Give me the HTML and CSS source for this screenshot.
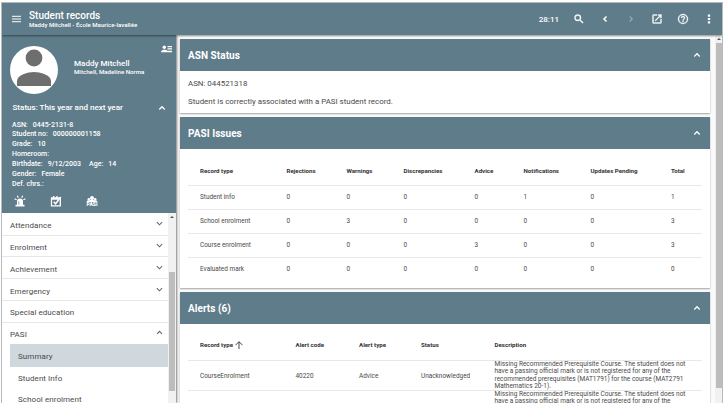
FILE: index.html
```html
<!DOCTYPE html>
<html lang="en">
<head>
<meta charset="utf-8">
<title>Student records</title>
<link rel="stylesheet" href="styles.css">
</head>
<body>
<svg class="defs" width="0" height="0">
  <symbol id="up" viewBox="0 0 24 24"><path d="M5.500 15.500l6.500-6.500 6.500 6.500" fill="none" stroke="currentColor" stroke-width="3"/></symbol>
  <symbol id="down" viewBox="0 0 24 24"><path d="M5 8.500l7 7 7-7" fill="none" stroke="currentColor" stroke-width="2.800"/></symbol>
</svg>
<div class="app">
  <header class="topbar">
    <svg class="menu" viewBox="0 0 10 8"><path d="M0 1h10M0 4h10M0 7h10" stroke="currentColor" stroke-width="1.1"/></svg>
    <div class="titles">
      <h1>Student records</h1>
      <p>Maddy Mitchell - École Maurice-lavallée</p>
    </div>
    <div class="actions">
      <span class="timer">28:11</span>
      <svg viewBox="0 0 24 24"><path fill="currentColor" stroke="currentColor" stroke-width=".8" d="M15.500 14h-.79l-.28-.27A6.470 6.470 0 0 0 16 9.500 6.500 6.500 0 1 0 9.500 16c1.610 0 3.090-.59 4.230-1.570l.27.28v.79l5 4.990L20.490 19l-4.990-5zm-6 0C7.010 14 5 11.990 5 9.500S7.010 5 9.500 5 14 7.010 14 9.500 11.990 14 9.500 14z"/></svg>
      <svg viewBox="0 0 24 24"><path fill="none" stroke="currentColor" stroke-width="3" d="M15 7l-5 5 5 5"/></svg>
      <svg class="dim" viewBox="0 0 24 24"><path fill="none" stroke="currentColor" stroke-width="2.400" d="M9.500 7l5 5-5 5"/></svg>
      <svg viewBox="0 0 24 24"><path fill="currentColor" stroke="currentColor" stroke-width=".6" d="M19 19H5V5h7V3H5a2 2 0 0 0-2 2v14a2 2 0 0 0 2 2h14a2 2 0 0 0 2-2v-7h-2v7zM14 3v2h3.590l-9.830 9.830 1.410 1.410L19 6.410V10h2V3h-7z"/></svg>
      <svg viewBox="0 0 24 24"><path fill="currentColor" stroke="currentColor" stroke-width=".5" d="M11 18h2v-2h-2v2zm1-16a10 10 0 1 0 0 20 10 10 0 0 0 0-20zm0 18a8 8 0 1 1 0-16 8 8 0 0 1 0 16zm0-14a4 4 0 0 0-4 4h2a2 2 0 1 1 4 0c0 2-3 1.750-3 5h2c0-2.250 3-2.500 3-5a4 4 0 0 0-4-4z"/></svg>
      <svg viewBox="0 0 24 24"><path fill="currentColor" d="M9.700 3h4.600v4.400H9.700zM9.700 9.800h4.600v4.400H9.700zM9.700 16.600h4.600V21H9.700z"/></svg>
    </div>
  </header>
  <div class="body">
    <aside class="side">
      <section class="profile">
        <div class="identity">
          <svg class="avatar" viewBox="0 0 48 48"><circle cx="24" cy="24" r="24" fill="#fff"/><circle cx="24" cy="12" r="8.400" fill="#6e6e6e"/><path d="M7 40v-5c0-6 11-9 17-9s17 3 17 9v5z" fill="#6e6e6e"/></svg>
          <div class="names"><strong>Maddy Mitchell</strong><span>Mitchell, Madeline Norma</span></div>
          <svg class="card-icon" viewBox="0 0 12 8"><g fill="currentColor"><circle cx="3.300" cy="2.300" r="1.700"/><path d="M0 7.200C0 5.300 2 4.700 3.300 4.700S6 5 6.300 5.700H11v1.500zM6.500 1H11v1.300H6.500zM6.500 3.300H11v1.300H6.500z"/></g></svg>
        </div>
        <div class="status"><span>Status: This year and next year</span><svg viewBox="0 0 24 24"><use href="#up"/></svg></div>
        <dl class="facts">
          <div><dt>ASN:</dt><dd>0445-2131-8</dd></div>
          <div><dt>Student no:</dt><dd>000000001158</dd></div>
          <div><dt>Grade:</dt><dd>10</dd></div>
          <div><dt>Homeroom:</dt></div>
          <div><dt>Birthdate:</dt><dd>9/12/2003</dd><dt class="second">Age:</dt><dd>14</dd></div>
          <div><dt>Gender:</dt><dd>Female</dd></div>
          <div><dt>Def. chrs.:</dt></div>
        </dl>
        <div class="badges">
          <svg viewBox="0 0 12 12"><g fill="currentColor"><path d="M3 10V6.500a3 3 0 0 1 6 0V10zM1.500 9.800h9v1.700h-9z"/><path d="M3.300.8l1 1.800M8.700.8l-1 1.800M.6 3.800l2 1M11.400 3.800l-2 1" stroke="currentColor" stroke-width="1.200"/></g><path d="M4.800 6.300V9.500" stroke="#5f7c8a" stroke-width=".7"/></svg>
          <svg viewBox="0 0 12 12"><path d="M1.500 3h8.800v7.800H1.500z" fill="none" stroke="currentColor" stroke-width="1.300"/><path d="M1.500 3h7v1.800h-7zM3 1h1.300v2H3zM6.300 1h1.300v2H6.300z" fill="currentColor"/><path d="M3.700 6.800l1.900 2L10.800 2" fill="none" stroke="currentColor" stroke-width="1.400"/></svg>
          <svg viewBox="0 0 12 12"><g fill="currentColor"><circle cx="6" cy="2.900" r="2"/><circle cx="2.800" cy="4.400" r="1.300"/><circle cx="9.200" cy="4.400" r="1.300"/><path d="M.6 6.900c0-1.500 1.800-1.700 2.700-1.300 1-1 4.400-1 5.400 0 .9-.4 2.700-.2 2.700 1.300z"/></g><text x="6" y="10.700" text-anchor="middle">PASI</text></svg>
        </div>
      </section>
      <div class="navwrap">
        <nav class="nav">
          <a>Attendance<svg viewBox="0 0 24 24"><use href="#down"/></svg></a>
          <a>Enrolment<svg viewBox="0 0 24 24"><use href="#down"/></svg></a>
          <a>Achievement<svg viewBox="0 0 24 24"><use href="#down"/></svg></a>
          <a>Emergency<svg viewBox="0 0 24 24"><use href="#down"/></svg></a>
          <a>Special education</a>
          <a class="open">PASI<svg viewBox="0 0 24 24"><use href="#up"/></svg></a>
          <a class="sub current">Summary</a>
          <a class="sub">Student Info</a>
          <a class="sub">School enrolment</a>
        </nav>
        <div class="bar"><i class="arrow"></i><i class="thumb"></i></div>
      </div>
    </aside>
    <main class="main">
      <section class="card asn">
        <h2>ASN Status<svg viewBox="0 0 24 24"><use href="#up"/></svg></h2>
        <div class="text"><p>ASN: 044521318</p><p>Student is correctly associated with a PASI student record.</p></div>
      </section>
      <section class="card issues">
        <h2>PASI Issues<svg viewBox="0 0 24 24"><use href="#up"/></svg></h2>
        <div class="table">
          <div class="row head"><b>Record type</b><b>Rejections</b><b>Warnings</b><b>Discrepancies</b><b>Advice</b><b>Notifications</b><b>Updates Pending</b><b>Total</b></div>
          <div class="row"><span>Student info</span><span>0</span><span>0</span><span>0</span><span>0</span><span>1</span><span>0</span><span>1</span></div>
          <div class="row"><span>School enrolment</span><span>0</span><span>3</span><span>0</span><span>0</span><span>0</span><span>0</span><span>3</span></div>
          <div class="row"><span>Course enrolment</span><span>0</span><span>0</span><span>0</span><span>3</span><span>0</span><span>0</span><span>3</span></div>
          <div class="row"><span>Evaluated mark</span><span>0</span><span>0</span><span>0</span><span>0</span><span>0</span><span>0</span><span>0</span></div>
        </div>
      </section>
      <section class="card alerts">
        <h2>Alerts (6)<svg viewBox="0 0 24 24"><use href="#up"/></svg></h2>
        <div class="table">
          <div class="row head"><b>Record type<svg class="sort" viewBox="0 0 8 8"><path d="M4 8V.8M.5 4.200L4 .7l3.500 3.500" fill="none" stroke="currentColor" stroke-width=".9"/></svg></b><b>Alert code</b><b>Alert type</b><b>Status</b><b>Description</b></div>
          <div class="row"><span>CourseEnrolment</span><span>40220</span><span>Advice</span><span>Unacknowledged</span><span class="desc">Missing Recommended Prerequisite Course. The student does not<br>have a passing official mark or is not registered for any of the<br>recommended prerequisites (MAT1791) for the course (MAT2791<br>Mathematics 20-1).</span></div>
          <div class="row"><span>CourseEnrolment</span><span>40220</span><span>Advice</span><span>Unacknowledged</span><span class="desc">Missing Recommended Prerequisite Course. The student does not<br>have a passing official mark or is not registered for any of the<br>recommended prerequisites (MAT1791) for the course (MAT2791<br>Mathematics 20-1).</span></div>
        </div>
      </section>
    </main>
    <div class="bar page"><i class="arrow"></i><i class="thumb"></i></div>
  </div>
</div>
</body>
</html>
```
FILE: styles.css
```css
* { box-sizing: border-box; margin: 0; padding: 0; }
html, body { height: 403px; overflow: hidden; }
body { font-family: Roboto, "Liberation Sans", sans-serif; background: #fff; color: #4a4a4a; padding: 2px 1px 0 1px; }
.defs { display: block; position: absolute; }
svg { display: block; flex: none; }
.app { height: 401px; overflow: hidden; border: 1px solid #b5b9bb; border-bottom: 0; display: flex; flex-direction: column; background: #fafafa; }
.topbar { height: 32px; flex: none; background: #5f7c8a; color: #fff; display: flex; align-items: center; padding: 0 7px 0 10px; box-shadow: 0 1px 2px rgba(0,0,0,.45); position: relative; z-index: 2; }
.menu { width: 9px; height: 8px; }
.titles { margin-left: 8px; flex: 1; }
.titles h1 { font-size: 10px; line-height: 11px; font-weight: 500; }
.titles p { font-size: 6.100px; line-height: 8px; font-weight: 500; }
.actions { display: flex; align-items: center; gap: 14px; }
.actions svg { width: 12px; height: 12px; }
.actions .dim { opacity: .35; }
.timer { font-size: 8px; font-weight: 500; }
.body { flex: 1; min-height: 0; display: flex; }
.side { width: 174px; flex: none; display: flex; flex-direction: column; box-shadow: 1px 0 2px rgba(0,0,0,.5); background: #fff; z-index: 1; }
.profile { height: 178px; flex: none; background: #5f7c8a; color: #fff; padding: 11px 8px 0; }
.identity { display: flex; height: 48px; }
.avatar { width: 48px; height: 48px; }
.names { margin-left: 16px; padding-top: 12px; flex: 1; white-space: nowrap; }
.names strong { display: block; font-weight: 500; font-size: 8.100px; line-height: 10px; }
.names span { display: block; font-weight: 500; font-size: 6.150px; line-height: 8px; }
.card-icon { width: 12px; height: 8px; margin-right: -5px; margin-top: -1px; }
.status { display: flex; justify-content: space-between; align-items: center; height: 12px; margin-top: 7.500px; padding: 0 1px 0 2.500px; font-size: 8.050px; font-weight: 500; }
.status svg { width: 10px; height: 10px; }
.facts { margin-top: 7px; padding-left: 2px; font-size: 7px; line-height: 9.900px; font-weight: 500; }
.facts div { display: flex; height: 9.900px; }
.facts dd { margin-left: 5px; }
.facts .second { margin-left: 8px; }
.badges { display: flex; gap: 24px; padding: 5.500px 0 0 4px; }
.badges svg { width: 12px; height: 12px; }
.badges text { font-size: 5px; font-weight: 900; fill: #fff; }
.navwrap { flex: 1; min-height: 0; display: flex; }
.nav { flex: 1; overflow: hidden; padding-top: .8px; }
.nav a { display: flex; align-items: center; justify-content: space-between; height: 21.800px; padding: 3px 4px 0 8px; border-bottom: 1px solid #e6e6e6; font-size: 8px; letter-spacing: .07px; }
.nav svg { width: 9px; height: 9px; margin-top: -4px; color: #666; }
.nav .open, .nav .sub { border-color: transparent; }
.nav .open { height: 21.400px; }
.nav .sub { padding-left: 8px; margin-left: 8px; }
.nav .current { background: #cfd8dc; height: 23px; padding-top: 2px; margin-bottom: -1px; }
.bar { width: 8px; flex: none; background: #f1f1f1; display: flex; flex-direction: column; align-items: center; }
.bar .arrow { border: 2px solid transparent; border-top: 0; border-bottom: 2px solid #555; margin-top: 3px; }
.bar .thumb { width: 6px; height: 119px; margin-top: 54px; background: #bdbdbd; }
.main { flex: 1; min-width: 0; padding: 4px 5px 0 4px; display: flex; flex-direction: column; gap: 4px; }
.card { flex: none; background: #fff; box-shadow: 0 1px 1.500px rgba(0,0,0,.35); }
.card h2 { height: 32px; background: #5f7c8a; color: #fff; display: flex; align-items: center; justify-content: space-between; padding: 0 8px; font-size: 10px; font-weight: 700; letter-spacing: .05px; }
.card h2 svg { width: 10px; height: 10px; }
.asn { height: 74px; }
.issues { height: 171px; }
.alerts { height: 180px; }
.text { padding: 4px 8px; font-size: 7.920px; line-height: 17.500px; }
.table { padding: 0 8px; font-size: 6.450px; }
.row { display: grid; align-items: center; height: 23.900px; padding-left: 12px; border-top: 1px solid #e8e8e8; white-space: nowrap; }
.row.head { height: 36px; padding-top: 8px; border-top: 0; font-size: 6.150px; color: #333; }
.issues .row { grid-template-columns: 86.500px 60px 57px 71px 49px 67px 80.500px 1fr; }
.alerts .row { grid-template-columns: 95.500px 63.500px 62px 73.500px 1fr; height: 30.300px; }
.alerts .row.head { height: 35.500px; padding-top: 7px; }
.row b { display: flex; align-items: center; }
.sort { width: 8px; height: 8px; margin-left: 2px; }
.desc { font-size: 6.500px; line-height: 7.500px; }
.page { width: 7px; }
.page .thumb { height: 345px; margin-top: 3px; }
```
